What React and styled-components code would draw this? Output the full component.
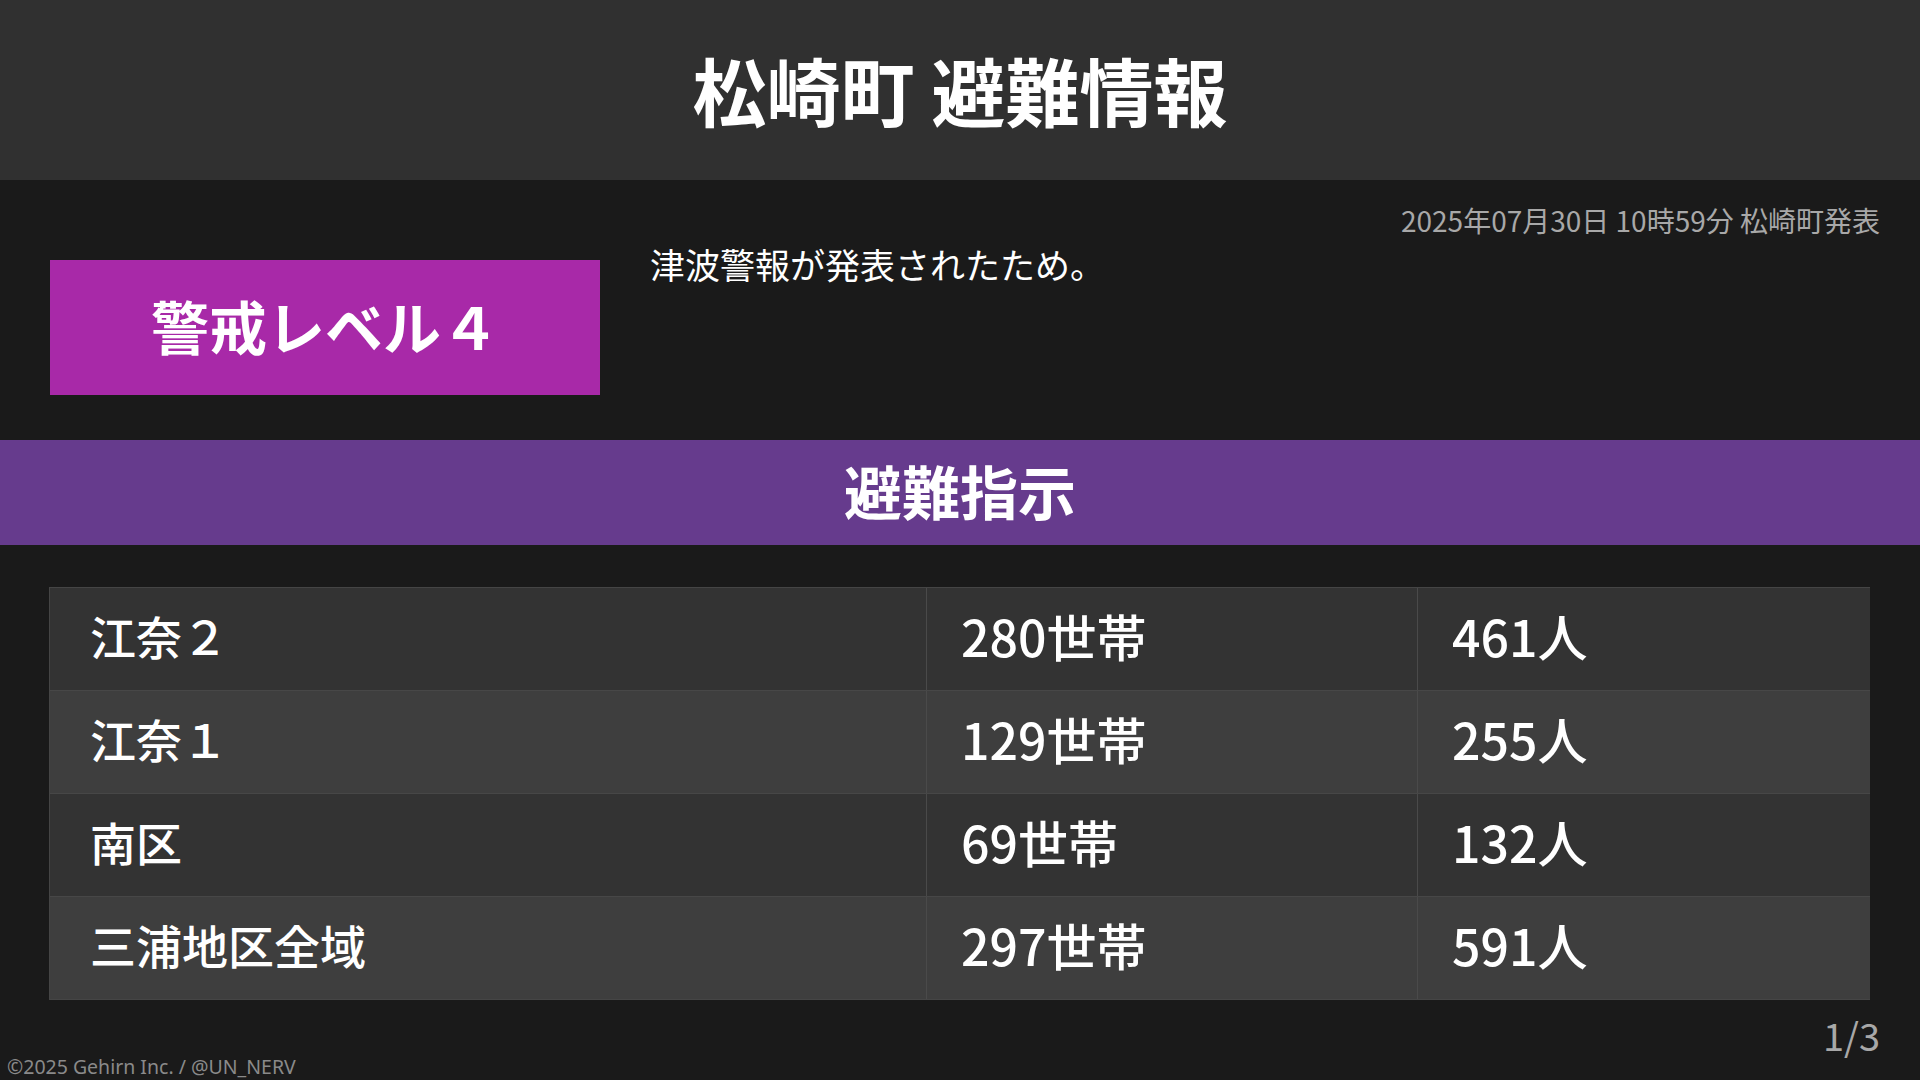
import React from "react";
import styled, { createGlobalStyle } from "styled-components";

const areas = [
  { name: "江奈２", households: "280世帯", people: "461人" },
  { name: "江奈１", households: "129世帯", people: "255人" },
  { name: "南区", households: "69世帯", people: "132人" },
  { name: "三浦地区全域", households: "297世帯", people: "591人" },
];

export default function App() {
  return (
    <>
      <GlobalStyle />
      <Page>
        <Header>
          <Title>松崎町 避難情報</Title>
        </Header>

        <Info>
          <Issued>2025年07月30日 10時59分 松崎町発表</Issued>
          <InfoRow>
            <LevelBox>警戒レベル４</LevelBox>
            <Reason>津波警報が発表されたため。</Reason>
          </InfoRow>
        </Info>

        <SectionBar>避難指示</SectionBar>

        <AreaTable>
          {areas.map((area, i) => (
            <AreaRow key={i} $alt={i % 2 === 1}>
              <Cell $pad={40} $size={46}>
                {area.name}
              </Cell>
              <Cell $pad={34} $size={50} $divider>
                {area.households}
              </Cell>
              <Cell $pad={34} $size={50} $divider>
                {area.people}
              </Cell>
            </AreaRow>
          ))}
        </AreaTable>

        <Footer>
          <Copyright>©2025 Gehirn Inc. / @UN_NERV</Copyright>
          <PageNum>1/3</PageNum>
        </Footer>
      </Page>
    </>
  );
}

const GlobalStyle = createGlobalStyle`
  html, body {
    margin: 0;
    padding: 0;
    background: #1a1a1a;
  }
  body {
    font-family: "Noto Sans CJK JP", "Noto Sans", sans-serif;
    color: #ffffff;
  }
`;

const Page = styled.div`
  width: 1920px;
  height: 1080px;
  display: flex;
  flex-direction: column;
  background: #1a1a1a;
  overflow: hidden;
`;

const Header = styled.header`
  height: 180px;
  flex-shrink: 0;
  box-sizing: border-box;
  padding-bottom: 3px;
  display: flex;
  align-items: center;
  justify-content: center;
  background: #303030;
`;

const Title = styled.h1`
  margin: 0;
  font-size: 74px;
  font-weight: 700;
  line-height: 1;
`;

const Info = styled.section`
  padding: 20px 40px 45px 50px;
  display: flex;
  flex-direction: column;
`;

const Issued = styled.div`
  height: 40px;
  line-height: 40px;
  font-size: 28px;
  color: #a8a8a8;
  text-align: right;
`;

const InfoRow = styled.div`
  display: flex;
  align-items: flex-start;
  gap: 50px;
`;

const LevelBox = styled.div`
  margin-top: 20px;
  width: 550px;
  height: 135px;
  flex-shrink: 0;
  box-sizing: border-box;
  padding-bottom: 6px;
  display: flex;
  align-items: center;
  justify-content: center;
  background: #a829a8;
  font-size: 58px;
  font-weight: 700;
`;

const Reason = styled.p`
  margin: 0;
  font-size: 35px;
  line-height: 48px;
`;

const SectionBar = styled.h2`
  margin: 0;
  height: 105px;
  flex-shrink: 0;
  box-sizing: border-box;
  padding-bottom: 6px;
  display: flex;
  align-items: center;
  justify-content: center;
  background: #663b8d;
  font-size: 58px;
  font-weight: 700;
`;

const AreaTable = styled.div`
  margin: 42px 50px 0 49px;
  border: 1px solid #454545;
  border-width: 1px 0 1px 1px;
`;

const AreaRow = styled.div`
  display: grid;
  grid-template-columns: 876px 491px 1fr;
  height: 102px;
  background: ${(p) => (p.$alt ? "#3e3e3e" : "#333333")};
  border-top: ${(p) => (p.$alt ? "1px solid #474747" : "0")};
  border-bottom: ${(p) => (p.$alt ? "1px solid #474747" : "0")};

  &:first-child {
    border-top: 0;
  }
  &:last-child {
    border-bottom: 0;
  }
`;

const Cell = styled.div`
  display: flex;
  align-items: center;
  padding-left: ${(p) => p.$pad}px;
  padding-bottom: 9px;
  border-left: ${(p) => (p.$divider ? "1px solid #4a4a4a" : "0")};
  font-size: ${(p) => p.$size}px;
  font-weight: 500;
`;

const Footer = styled.footer`
  flex: 1;
  display: flex;
  justify-content: space-between;
  align-items: flex-start;
  padding: 0 40px 0 7px;
`;

const Copyright = styled.div`
  align-self: flex-end;
  padding-bottom: 2px;
  font-family: "Noto Sans", sans-serif;
  font-size: 19.5px;
  line-height: 1.2;
  color: #8a8a8a;
`;

const PageNum = styled.div`
  margin-top: 12px;
  font-size: 38px;
  line-height: 1.2;
  color: #a8a8a8;
`;
